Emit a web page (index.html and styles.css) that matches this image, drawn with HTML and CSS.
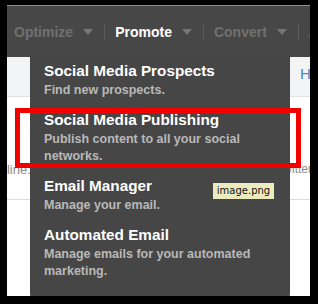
FILE: index.html
```html
<!DOCTYPE html>
<html lang="en">
<head>
    <meta charset="UTF-8">
    <meta name="viewport" content="width=device-width, initial-scale=1.0">
    <title>Promote menu</title>
    <link rel="stylesheet" href="styles.css">
</head>
<body>
    <div class="window">
        <nav class="navbar">
            <div class="nav-item">Optimize <span class="caret"></span></div>
            <div class="nav-item active">Promote <span class="caret"></span></div>
            <div class="nav-item">Convert <span class="caret"></span></div>
            <div class="nav-item">Analyze <span class="caret"></span></div>
        </nav>

        <div class="page">
            <div class="page-header">
                <span class="help-link">Help</span>
            </div>
            <div class="page-row">
                <span class="row-left">Outline.</span>
                <span class="row-right">Twitter</span>
            </div>
        </div>

        <div class="dropdown">
            <div class="menu-item">
                <div class="menu-title">Social Media Prospects</div>
                <div class="menu-desc">Find new prospects.</div>
            </div>
            <div class="menu-item">
                <div class="menu-title">Social Media Publishing</div>
                <div class="menu-desc">Publish content to all your social networks.</div>
            </div>
            <div class="menu-item">
                <div class="menu-title">Email Manager</div>
                <div class="menu-desc">Manage your email.</div>
            </div>
            <div class="menu-item">
                <div class="menu-title">Automated Email</div>
                <div class="menu-desc">Manage emails for your automated marketing.</div>
            </div>
        </div>

        <div class="highlight"></div>
        <div class="tooltip">image.png</div>
    </div>
</body>
</html>
```

FILE: styles.css
```css
body {
    margin: 0;
    background-color: #000;
    font-family: "Liberation Sans", Arial, sans-serif;
    padding: 5px 8px 8px 7px;
}

.window {
    position: relative;
    width: 303px;
    height: 291px;
    background-color: #fff;
    overflow: hidden;
}

/* top navigation */
.navbar {
    display: flex;
    align-items: center;
    height: 51px;
    border-top: 1px solid #8e8e8e;
    background-color: #474747;
    white-space: nowrap;
}

.nav-item {
    display: flex;
    align-items: center;
    gap: 10px;
    padding: 0 11px 0 10px;
    height: 16px;
    border-right: 1px solid #5c5c5c;
    font-size: 14px;
    font-weight: bold;
    color: #717171;
}

.nav-item:first-child {
    padding-left: 7px;
}

.nav-item.active {
    color: #fff;
}

.caret {
    width: 0;
    height: 0;
    border-left: 5px solid transparent;
    border-right: 5px solid transparent;
    border-top: 6px solid #767676;
    margin-top: 1px;
}

/* page behind the menu */
.page {
    font-size: 13px;
    color: #8a8a8a;
}

.page-header {
    display: flex;
    justify-content: flex-end;
    height: 39px;
    background-color: #f3f4f6;
    border-bottom: 1px solid #e2e2e2;
}

.help-link {
    width: 10px;
    overflow: hidden;
    padding-top: 8px;
    font-size: 15px;
    color: #4a86c8;
}

.page-row {
    display: flex;
    justify-content: space-between;
    margin-top: 65px;
    padding-bottom: 22px;
    border-bottom: 1px solid #dcdcdc;
}

.row-left {
    margin-left: -21px;
}

.row-right {
    margin-right: -2px;
    font-size: 12px;
}

/* dropdown menu */
.dropdown {
    position: absolute;
    left: 23px;
    top: 52px;
    width: 260px;
    height: 243px;
    background-color: #464646;
    border-radius: 0 0 6px 6px;
    padding-top: 5px;
    box-sizing: border-box;
}

.menu-item {
    padding: 0 20px 12px 14px;
}

.menu-title {
    font-size: 15.3px;
    line-height: 18px;
    font-weight: bold;
    color: #fff;
}

.menu-desc {
    margin-top: 2px;
    font-size: 12.5px;
    line-height: 17px;
    font-weight: bold;
    color: #b9b9b9;
}

.highlight {
    position: absolute;
    left: 8px;
    top: 103px;
    width: 276px;
    height: 50px;
    border: 5px solid #f20000;
}

.tooltip {
    position: absolute;
    left: 206px;
    top: 178px;
    width: 61px;
    height: 16px;
    background-color: #ecebbd;
    font-family: "DejaVu Sans", sans-serif;
    font-size: 10px;
    line-height: 16px;
    text-align: center;
    color: #111;
}
```
